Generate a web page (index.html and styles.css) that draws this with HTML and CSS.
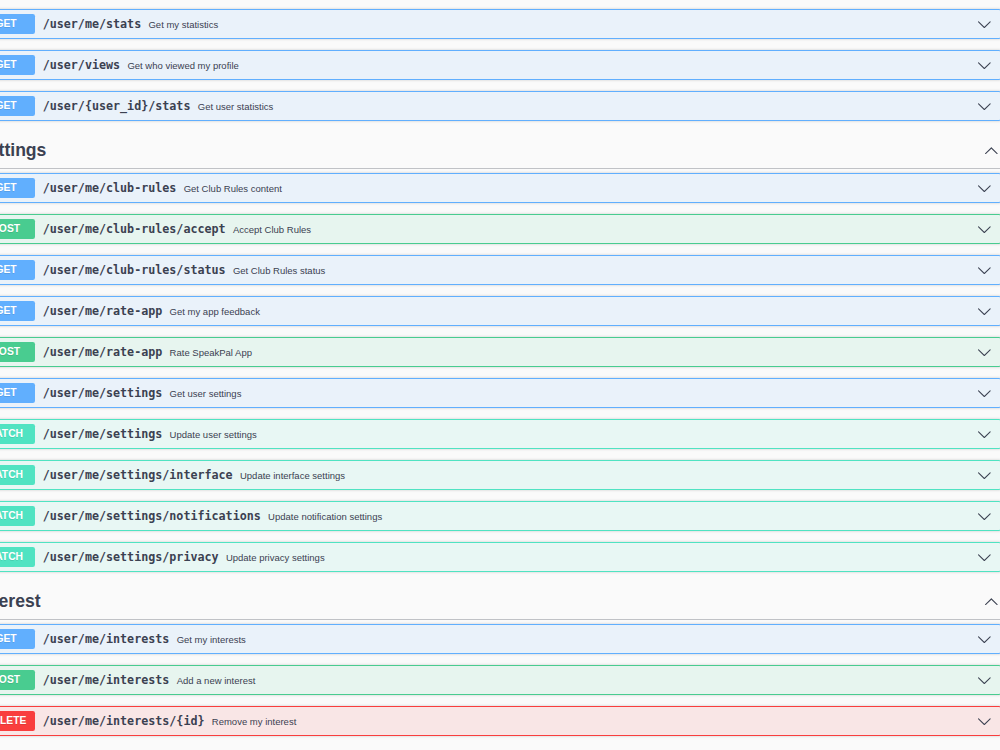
FILE: index.html
```html
<!DOCTYPE html>
<html lang="en">
<head>
  <meta charset="UTF-8">
  <title>API docs</title>
  <link rel="stylesheet" href="styles.css">
</head>
<body>

  <div class="page">

    <!-- tail of the previous tag -->
    <div class="tag-ops">
      <div class="opblock get">
        <span class="method">GET</span>
        <span class="path">/user/me/stats</span>
        <span class="desc">Get my statistics</span>
        <span class="arrow"><svg viewBox="0 0 20 20"><path d="M17.418 6.109c.272-.268.709-.268.979 0s.271.701 0 .969l-7.908 7.83c-.27.268-.707.268-.979 0l-7.908-7.83c-.27-.268-.27-.701 0-.969.271-.268.709-.268.979 0L10 13.25l7.418-7.141z"/></svg></span>
      </div>
      <div class="opblock get">
        <span class="method">GET</span>
        <span class="path">/user/views</span>
        <span class="desc">Get who viewed my profile</span>
        <span class="arrow"><svg viewBox="0 0 20 20"><path d="M17.418 6.109c.272-.268.709-.268.979 0s.271.701 0 .969l-7.908 7.83c-.27.268-.707.268-.979 0l-7.908-7.83c-.27-.268-.27-.701 0-.969.271-.268.709-.268.979 0L10 13.25l7.418-7.141z"/></svg></span>
      </div>
      <div class="opblock get">
        <span class="method">GET</span>
        <span class="path">/user/{user_id}/stats</span>
        <span class="desc">Get user statistics</span>
        <span class="arrow"><svg viewBox="0 0 20 20"><path d="M17.418 6.109c.272-.268.709-.268.979 0s.271.701 0 .969l-7.908 7.83c-.27.268-.707.268-.979 0l-7.908-7.83c-.27-.268-.27-.701 0-.969.271-.268.709-.268.979 0L10 13.25l7.418-7.141z"/></svg></span>
      </div>
    </div>

    <!-- Settings -->
    <div class="tag-section">
      <h3 class="tag-head">
        <span class="tag-name">Settings</span>
        <span class="tag-arrow"><svg viewBox="0 0 20 20"><path d="M17.418 14.908c.272.27.709.27.979 0s.271-.695 0-.965l-7.908-7.83c-.27-.268-.707-.268-.979 0l-7.908 7.83c-.27.27-.27.695 0 .965.271.268.709.268.979 0L10 7.76l7.418 7.148z"/></svg></span>
      </h3>
      <div class="tag-ops">
        <div class="opblock get">
          <span class="method">GET</span>
          <span class="path">/user/me/club-rules</span>
          <span class="desc">Get Club Rules content</span>
          <span class="arrow"><svg viewBox="0 0 20 20"><path d="M17.418 6.109c.272-.268.709-.268.979 0s.271.701 0 .969l-7.908 7.83c-.27.268-.707.268-.979 0l-7.908-7.83c-.27-.268-.27-.701 0-.969.271-.268.709-.268.979 0L10 13.25l7.418-7.141z"/></svg></span>
        </div>
        <div class="opblock post">
          <span class="method">POST</span>
          <span class="path">/user/me/club-rules/accept</span>
          <span class="desc">Accept Club Rules</span>
          <span class="arrow"><svg viewBox="0 0 20 20"><path d="M17.418 6.109c.272-.268.709-.268.979 0s.271.701 0 .969l-7.908 7.83c-.27.268-.707.268-.979 0l-7.908-7.83c-.27-.268-.27-.701 0-.969.271-.268.709-.268.979 0L10 13.25l7.418-7.141z"/></svg></span>
        </div>
        <div class="opblock get">
          <span class="method">GET</span>
          <span class="path">/user/me/club-rules/status</span>
          <span class="desc">Get Club Rules status</span>
          <span class="arrow"><svg viewBox="0 0 20 20"><path d="M17.418 6.109c.272-.268.709-.268.979 0s.271.701 0 .969l-7.908 7.83c-.27.268-.707.268-.979 0l-7.908-7.83c-.27-.268-.27-.701 0-.969.271-.268.709-.268.979 0L10 13.25l7.418-7.141z"/></svg></span>
        </div>
        <div class="opblock get">
          <span class="method">GET</span>
          <span class="path">/user/me/rate-app</span>
          <span class="desc">Get my app feedback</span>
          <span class="arrow"><svg viewBox="0 0 20 20"><path d="M17.418 6.109c.272-.268.709-.268.979 0s.271.701 0 .969l-7.908 7.83c-.27.268-.707.268-.979 0l-7.908-7.83c-.27-.268-.27-.701 0-.969.271-.268.709-.268.979 0L10 13.25l7.418-7.141z"/></svg></span>
        </div>
        <div class="opblock post">
          <span class="method">POST</span>
          <span class="path">/user/me/rate-app</span>
          <span class="desc">Rate SpeakPal App</span>
          <span class="arrow"><svg viewBox="0 0 20 20"><path d="M17.418 6.109c.272-.268.709-.268.979 0s.271.701 0 .969l-7.908 7.83c-.27.268-.707.268-.979 0l-7.908-7.83c-.27-.268-.27-.701 0-.969.271-.268.709-.268.979 0L10 13.25l7.418-7.141z"/></svg></span>
        </div>
        <div class="opblock get">
          <span class="method">GET</span>
          <span class="path">/user/me/settings</span>
          <span class="desc">Get user settings</span>
          <span class="arrow"><svg viewBox="0 0 20 20"><path d="M17.418 6.109c.272-.268.709-.268.979 0s.271.701 0 .969l-7.908 7.83c-.27.268-.707.268-.979 0l-7.908-7.83c-.27-.268-.27-.701 0-.969.271-.268.709-.268.979 0L10 13.25l7.418-7.141z"/></svg></span>
        </div>
        <div class="opblock patch">
          <span class="method">PATCH</span>
          <span class="path">/user/me/settings</span>
          <span class="desc">Update user settings</span>
          <span class="arrow"><svg viewBox="0 0 20 20"><path d="M17.418 6.109c.272-.268.709-.268.979 0s.271.701 0 .969l-7.908 7.83c-.27.268-.707.268-.979 0l-7.908-7.83c-.27-.268-.27-.701 0-.969.271-.268.709-.268.979 0L10 13.25l7.418-7.141z"/></svg></span>
        </div>
        <div class="opblock patch">
          <span class="method">PATCH</span>
          <span class="path">/user/me/settings/interface</span>
          <span class="desc">Update interface settings</span>
          <span class="arrow"><svg viewBox="0 0 20 20"><path d="M17.418 6.109c.272-.268.709-.268.979 0s.271.701 0 .969l-7.908 7.83c-.27.268-.707.268-.979 0l-7.908-7.83c-.27-.268-.27-.701 0-.969.271-.268.709-.268.979 0L10 13.25l7.418-7.141z"/></svg></span>
        </div>
        <div class="opblock patch">
          <span class="method">PATCH</span>
          <span class="path">/user/me/settings/notifications</span>
          <span class="desc">Update notification settings</span>
          <span class="arrow"><svg viewBox="0 0 20 20"><path d="M17.418 6.109c.272-.268.709-.268.979 0s.271.701 0 .969l-7.908 7.83c-.27.268-.707.268-.979 0l-7.908-7.83c-.27-.268-.27-.701 0-.969.271-.268.709-.268.979 0L10 13.25l7.418-7.141z"/></svg></span>
        </div>
        <div class="opblock patch">
          <span class="method">PATCH</span>
          <span class="path">/user/me/settings/privacy</span>
          <span class="desc">Update privacy settings</span>
          <span class="arrow"><svg viewBox="0 0 20 20"><path d="M17.418 6.109c.272-.268.709-.268.979 0s.271.701 0 .969l-7.908 7.83c-.27.268-.707.268-.979 0l-7.908-7.83c-.27-.268-.27-.701 0-.969.271-.268.709-.268.979 0L10 13.25l7.418-7.141z"/></svg></span>
        </div>
      </div>
    </div>

    <!-- Interest -->
    <div class="tag-section">
      <h3 class="tag-head">
        <span class="tag-name">Interest</span>
        <span class="tag-arrow"><svg viewBox="0 0 20 20"><path d="M17.418 14.908c.272.27.709.27.979 0s.271-.695 0-.965l-7.908-7.83c-.27-.268-.707-.268-.979 0l-7.908 7.83c-.27.27-.27.695 0 .965.271.268.709.268.979 0L10 7.76l7.418 7.148z"/></svg></span>
      </h3>
      <div class="tag-ops">
        <div class="opblock get">
          <span class="method">GET</span>
          <span class="path">/user/me/interests</span>
          <span class="desc">Get my interests</span>
          <span class="arrow"><svg viewBox="0 0 20 20"><path d="M17.418 6.109c.272-.268.709-.268.979 0s.271.701 0 .969l-7.908 7.83c-.27.268-.707.268-.979 0l-7.908-7.83c-.27-.268-.27-.701 0-.969.271-.268.709-.268.979 0L10 13.25l7.418-7.141z"/></svg></span>
        </div>
        <div class="opblock post">
          <span class="method">POST</span>
          <span class="path">/user/me/interests</span>
          <span class="desc">Add a new interest</span>
          <span class="arrow"><svg viewBox="0 0 20 20"><path d="M17.418 6.109c.272-.268.709-.268.979 0s.271.701 0 .969l-7.908 7.83c-.27.268-.707.268-.979 0l-7.908-7.83c-.27-.268-.27-.701 0-.969.271-.268.709-.268.979 0L10 13.25l7.418-7.141z"/></svg></span>
        </div>
        <div class="opblock delete">
          <span class="method">DELETE</span>
          <span class="path">/user/me/interests/{id}</span>
          <span class="desc">Remove my interest</span>
          <span class="arrow"><svg viewBox="0 0 20 20"><path d="M17.418 6.109c.272-.268.709-.268.979 0s.271.701 0 .969l-7.908 7.83c-.27.268-.707.268-.979 0l-7.908-7.83c-.27-.268-.27-.701 0-.969.271-.268.709-.268.979 0L10 13.25l7.418-7.141z"/></svg></span>
        </div>
      </div>
    </div>

  </div>

</body>
</html>
```

FILE: styles.css
```css
body {
  margin: 0;
  height: 750px;
  overflow: hidden;
  background: #fafafa;
  color: #3b4151;
  font-family: 'Liberation Sans', Arial, sans-serif;
}

.page {
  width: 1030px;
  margin-left: -28px;
  padding-top: 9px;
}

/* tag header */
.tag-head {
  display: flex;
  align-items: center;
  justify-content: space-between;
  box-sizing: border-box;
  height: 37px;
  margin: 0 0 4px;
  padding: 0 3px 0 5px;
  border-bottom: 1px solid rgba(59, 65, 81, 0.3);
  font-size: 17.6px;
  font-weight: bold;
  color: #3b4151;
}

.tag-arrow svg {
  display: block;
  width: 14.7px;
  height: 14.7px;
  fill: #3b4151;
}

/* operation rows */
.opblock {
  display: flex;
  align-items: center;
  box-sizing: border-box;
  height: 30px;
  margin-bottom: 11px;
  padding: 0 3.7px;
  border: 1px solid #000;
  border-radius: 3px;
  box-shadow: 0 0 3px rgba(0, 0, 0, 0.19);
}

.method {
  min-width: 58.7px;
  height: 20px;
  line-height: 20px;
  text-align: center;
  border-radius: 2.2px;
  color: #fff;
  font-size: 10.3px;
  font-weight: bold;
  text-shadow: 0 1px 0 rgba(0, 0, 0, 0.1);
}

.path {
  padding: 0 7.3px;
  font-family: 'DejaVu Sans Mono', monospace;
  font-size: 11.7px;
  font-weight: bold;
  color: #3b4151;
}

.desc {
  flex: 1;
  font-size: 9.5px;
  color: #3b4151;
}

.arrow {
  padding-right: 6px;
}

.arrow svg {
  display: block;
  width: 14.7px;
  height: 14.7px;
  fill: #3b4151;
}

.opblock.get {
  background: rgba(97, 175, 254, 0.1);
  border-color: #61affe;
}
.opblock.get .method {
  background: #61affe;
}

.opblock.post {
  background: rgba(73, 204, 144, 0.1);
  border-color: #49cc90;
}
.opblock.post .method {
  background: #49cc90;
}

.opblock.patch {
  background: rgba(80, 227, 194, 0.1);
  border-color: #50e3c2;
}
.opblock.patch .method {
  background: #50e3c2;
}

.opblock.delete {
  background: rgba(249, 62, 62, 0.1);
  border-color: #f93e3e;
}
.opblock.delete .method {
  background: #f93e3e;
}
```
